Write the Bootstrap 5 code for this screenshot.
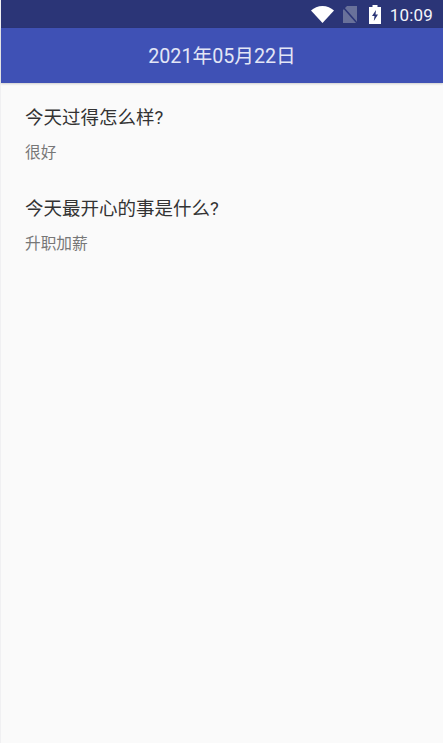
<!DOCTYPE html>
<html lang="zh-CN">
<head>
<meta charset="utf-8">
<title>日记</title>
<meta name="viewport" content="width=device-width, initial-scale=1">
<link href="https://cdn.jsdelivr.net/npm/bootstrap@5.3.0/dist/css/bootstrap.min.css" rel="stylesheet">
<style>
html, body { height: 100%; }
body { background: #fafafa; font-family: Roboto, "Noto Sans CJK SC", sans-serif; overflow: hidden; }
.phone-shell { height: 743px; border-left: 1px solid #f0f0f2; }
.status-strip { height: 28px; background: #2b3577; color: #f4f5fa; font-size: 17px; padding-right: 10px; }
.status-time { margin-left: 9px; letter-spacing: .2px; line-height: 1; padding-top: 2px; }
.title-strip { height: 55px; background: #3f51b5; color: #e3e6f6; font-size: 19.7px; padding-top: 2px; box-shadow: 0 1px 2px rgba(0,0,0,.18); }
.entry-area { padding: 21px 24px; }
.entry-q { font-size: 18.5px; line-height: 27px; color: #333; margin: 0 0 9px; font-weight: 400; padding-top: 1px; }
.entry-a { font-size: 15.7px; line-height: 24px; color: #777; margin: 0 0 30px; }
.st-wifi { margin-right: 9px; }
.st-sim { margin-right: 12px; }
</style>
</head>
<body>
<div class="phone-shell d-flex flex-column">
  <div class="status-strip d-flex align-items-center justify-content-end">
    <svg class="st-wifi" width="23" height="17" viewBox="0 0 23 17"><path d="M0 4.500C3 1.800 7 0 11.500 0S20 1.800 23 4.500L11.500 17Z" fill="#fff"/></svg>
    <svg class="st-sim" width="14" height="17" viewBox="0 0 14 17"><path d="M4 0H14V17H0V4Z" fill="#69719a"/><path d="M0 1L14 17" stroke="#2b3577" stroke-width="1.500"/></svg>
    <svg width="12" height="19" viewBox="0 0 12 19"><path d="M3.500 0H8.500V2H12V19H0V2H3.500Z" fill="#fff"/><path d="M7 5L3 11H5.500L4.800 16L9 9.500H6.500Z" fill="#2b3577"/></svg>
    <span class="status-time">10:09</span>
  </div>
  <header class="title-strip d-flex align-items-center justify-content-center">2021年05月22日</header>
  <main class="entry-area flex-grow-1">
    <h2 class="entry-q">今天过得怎么样?</h2>
    <p class="entry-a">很好</p>
    <h2 class="entry-q">今天最开心的事是什么?</h2>
    <p class="entry-a">升职加薪</p>
  </main>
</div>
<script src="https://cdn.jsdelivr.net/npm/bootstrap@5.3.0/dist/js/bootstrap.bundle.min.js"></script>
</body>
</html>
